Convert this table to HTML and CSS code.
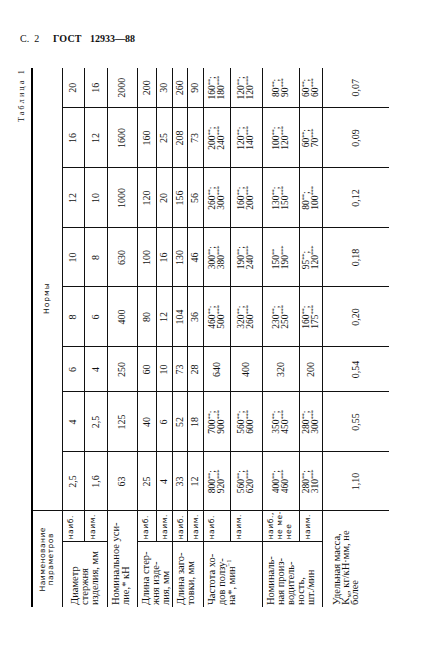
FILE: index.html
```html
<!DOCTYPE html>
<html lang="ru">
<head>
<meta charset="utf-8">
<title>ГОСТ 12933—88, с. 2</title>
<link rel="stylesheet" href="styles.css">
</head>
<body>
<div class="page">
  <header class="running-head">
    <span class="pg">С.&nbsp;&nbsp;2</span>
    <span class="std">ГОСТ</span>
    <span class="std-num">12933—88</span>
  </header>
  <div class="rot-wrap">
    <div class="sheet">
      <div class="caption">Таблица 1</div>
      <table class="spec">
        <colgroup>
          <col class="w65"><col class="w31"><col class="w59"><col class="w60"><col class="w45">
          <col class="w60"><col class="w59"><col class="w60"><col class="w60"><col class="w40">
        </colgroup>
        <tr class="r-head">
          <th colspan="2" class="th-name">Наименование<br>параметров</th>
          <th colspan="8" class="th-norm">Нормы</th>
        </tr>
        <tr class="r22">
          <td rowspan="2" class="name name-first">Диаметр<br>стержня<br>изделия, мм</td>
          <td class="lim">наиб.</td>
          <td>2,5</td><td>4</td><td>6</td><td>8</td><td>10</td><td>12</td><td>16</td><td>20</td>
        </tr>
        <tr class="r23">
          <td class="lim">наим.</td>
          <td>1,6</td><td>2,5</td><td>4</td><td>6</td><td>8</td><td>10</td><td>12</td><td>16</td>
        </tr>
        <tr class="r30">
          <td colspan="2" class="name">Номинальное уси-<br>лие,* кН</td>
          <td>63</td><td>125</td><td>250</td><td>400</td><td>630</td><td>1000</td><td>1600</td><td>2000</td>
        </tr>
        <tr class="r19">
          <td rowspan="2" class="name">Длина стер-<br>жня изде-<br>лия, мм</td>
          <td class="lim">наиб.</td>
          <td>25</td><td>40</td><td>60</td><td>80</td><td>100</td><td>120</td><td>160</td><td>200</td>
        </tr>
        <tr class="r16">
          <td class="lim">наим.</td>
          <td>4</td><td>6</td><td>10</td><td>12</td><td>16</td><td>20</td><td>25</td><td>30</td>
        </tr>
        <tr class="r15">
          <td rowspan="2" class="name">Длина заго-<br>товки, мм</td>
          <td class="lim">наиб.</td>
          <td>33</td><td>52</td><td>73</td><td>104</td><td>130</td><td>156</td><td>208</td><td>260</td>
        </tr>
        <tr class="r16">
          <td class="lim">наим.</td>
          <td>12</td><td>18</td><td>28</td><td>36</td><td>46</td><td>56</td><td>73</td><td>90</td>
        </tr>
        <tr class="r27">
          <td rowspan="2" class="name">Частота хо-<br>дов ползу-<br>на*, мин<sup class="exp">−1</sup></td>
          <td class="lim">наиб.</td>
          <td><span class="pair">800<sup>**</sup>;<br>920<sup>***</sup></span></td>
          <td><span class="pair">700<sup>**</sup>;<br>900<sup>***</sup></span></td>
          <td>640</td>
          <td><span class="pair">460<sup>**</sup>;<br>500<sup>***</sup></span></td>
          <td><span class="pair">300<sup>**</sup>;<br>380<sup>***</sup></span></td>
          <td><span class="pair">260<sup>**</sup>;<br>300<sup>***</sup></span></td>
          <td><span class="pair">200<sup>**</sup>;<br>240<sup>***</sup></span></td>
          <td><span class="pair">160<sup>**</sup>;<br>180<sup>***</sup></span></td>
        </tr>
        <tr class="r32">
          <td class="lim">наим.</td>
          <td><span class="pair">560<sup>**</sup>;<br>620<sup>***</sup></span></td>
          <td><span class="pair">560<sup>**</sup>;<br>600<sup>***</sup></span></td>
          <td>400</td>
          <td><span class="pair">320<sup>**</sup>;<br>260<sup>***</sup></span></td>
          <td><span class="pair">190<sup>**</sup>;<br>240<sup>***</sup></span></td>
          <td><span class="pair">160<sup>**</sup>;<br>200<sup>***</sup></span></td>
          <td><span class="pair">120<sup>**</sup>;<br>140<sup>***</sup></span></td>
          <td><span class="pair">120<sup>**</sup>;<br>120<sup>***</sup></span></td>
        </tr>
        <tr class="r37">
          <td rowspan="2" class="name">Номиналь-<br>ная произ-<br>водитель-<br>ность,<br>шт./мин</td>
          <td class="lim">наиб.,<br>не ме-<br>нее</td>
          <td><span class="pair">400<sup>**</sup>;<br>460<sup>***</sup></span></td>
          <td><span class="pair">350<sup>**</sup>;<br>450<sup>***</sup></span></td>
          <td>320</td>
          <td><span class="pair">230<sup>**</sup>;<br>250<sup>***</sup></span></td>
          <td><span class="pair">150<sup>**</sup><br>190<sup>***</sup></span></td>
          <td><span class="pair">130<sup>**</sup>;<br>150<sup>***</sup></span></td>
          <td><span class="pair">100<sup>**</sup>;<br>120<sup>***</sup></span></td>
          <td><span class="pair">80<sup>**</sup>;<br>90<sup>***</sup></span></td>
        </tr>
        <tr class="r23">
          <td class="lim">наим.</td>
          <td><span class="pair">280<sup>**</sup>;<br>310<sup>***</sup></span></td>
          <td><span class="pair">280<sup>**</sup>;<br>300<sup>***</sup></span></td>
          <td>200</td>
          <td><span class="pair">160<sup>**</sup>;<br>175<sup>***</sup></span></td>
          <td><span class="pair">95<sup>**</sup>;<br>120<sup>***</sup></span></td>
          <td><span class="pair">80<sup>**</sup>;<br>100<sup>***</sup></span></td>
          <td><span class="pair">60<sup>**</sup>;<br>70<sup>***</sup></span></td>
          <td><span class="pair">60<sup>**</sup>;<br>60<sup>***</sup></span></td>
        </tr>
        <tr class="r67">
          <td colspan="2" class="name name-last">Удельная масса,<br>K<sub>м</sub>, кг/кН·мм, не<br>более</td>
          <td>1,10</td><td>0,55</td><td>0,54</td><td>0,20</td><td>0,18</td><td>0,12</td><td>0,09</td><td>0,07</td>
        </tr>
      </table>
    </div>
  </div>
</div>
</body>
</html>
```

FILE: styles.css
```css
html, body {
  margin: 0;
  padding: 0;
  background: #ffffff;
}

body {
  width: 429px;
  height: 646px;
  overflow: hidden;
  font-family: "Liberation Serif", "DejaVu Serif", serif;
  color: #111111;
}

.page {
  padding: 32px 0 0 16px;
}

/* running head: С. 2  ГОСТ 12933—88 */
.running-head {
  display: flex;
  align-items: baseline;
  padding-left: 4px;
  height: 14px;
  line-height: 14px;
  font-size: 10px;
}

.pg {
  width: 33px;
}

.std {
  font-weight: bold;
  width: 37px;
  letter-spacing: 0.2px;
}

.std-num {
  font-weight: bold;
}

/* the table is printed sideways on the page */
.rot-wrap {
  margin-top: 22px;
  width: 376px;
  height: 539px;
}

.sheet {
  width: 539px;
  height: 376px;
  transform-origin: 0 0;
  transform: translateY(539px) rotate(-90deg);
}

.caption {
  height: 15px;
  line-height: 11px;
  font-size: 8px;
  letter-spacing: 2.2px;
  text-align: right;
}

.spec {
  width: 539px;
  table-layout: fixed;
  border-collapse: collapse;
  border-top: 2px solid #000;
}

.w65 { width: 65px; }
.w31 { width: 31px; }
.w59 { width: 59px; }
.w60 { width: 60px; }
.w45 { width: 45px; }
.w40 { width: 40px; }

.spec th,
.spec td {
  padding: 0;
  border: 1px solid #111;
  text-align: center;
  vertical-align: middle;
  font-size: 10px;
  line-height: 10px;
  font-weight: normal;
  overflow: visible;
  white-space: nowrap;
}

.spec tr > :first-child {
  border-left: none;
}

.spec tr > :last-child {
  border-right: none;
}

.spec tr:last-child > td {
  border-bottom: none;
}

.r-head { height: 30px; }
.r15 { height: 15px; }
.r16 { height: 16px; }
.r19 { height: 19px; }
.r22 { height: 22px; }
.r23 { height: 23px; }
.r27 { height: 27px; }
.r30 { height: 30px; }
.r32 { height: 32px; }
.r37 { height: 37px; }
.r67 { height: 67px; }

.spec .th-name {
  font-family: "DejaVu Sans", sans-serif;
  font-size: 7.5px;
  line-height: 8px;
  letter-spacing: 0.5px;
}

.spec .th-norm {
  font-family: "DejaVu Sans", sans-serif;
  font-size: 7.5px;
  letter-spacing: 1px;
  padding-right: 18px;
}

.spec .name {
  text-align: left;
  vertical-align: top;
  padding: 3px 0 0 2px;
  font-size: 10.5px;
  line-height: 10px;
}

.spec .name-first {
  padding-top: 7px;
}

.spec .name-last {
  padding-top: 9px;
  line-height: 9px;
}

.spec .lim {
  text-align: left;
  vertical-align: top;
  padding: 3px 0 0 2px;
  font-family: "DejaVu Sans", sans-serif;
  font-size: 7.5px;
  line-height: 9px;
  letter-spacing: 0.6px;
}

.pair {
  display: inline-block;
  text-align: left;
  font-size: 9.5px;
  line-height: 9px;
}

.pair sup {
  font-size: 6.5px;
  line-height: 0;
  vertical-align: 3px;
  letter-spacing: -0.2px;
}

.exp {
  font-size: 6.5px;
  line-height: 0;
  vertical-align: 4px;
}

.name sub {
  font-size: 7px;
  line-height: 0;
  vertical-align: -2px;
}
```
